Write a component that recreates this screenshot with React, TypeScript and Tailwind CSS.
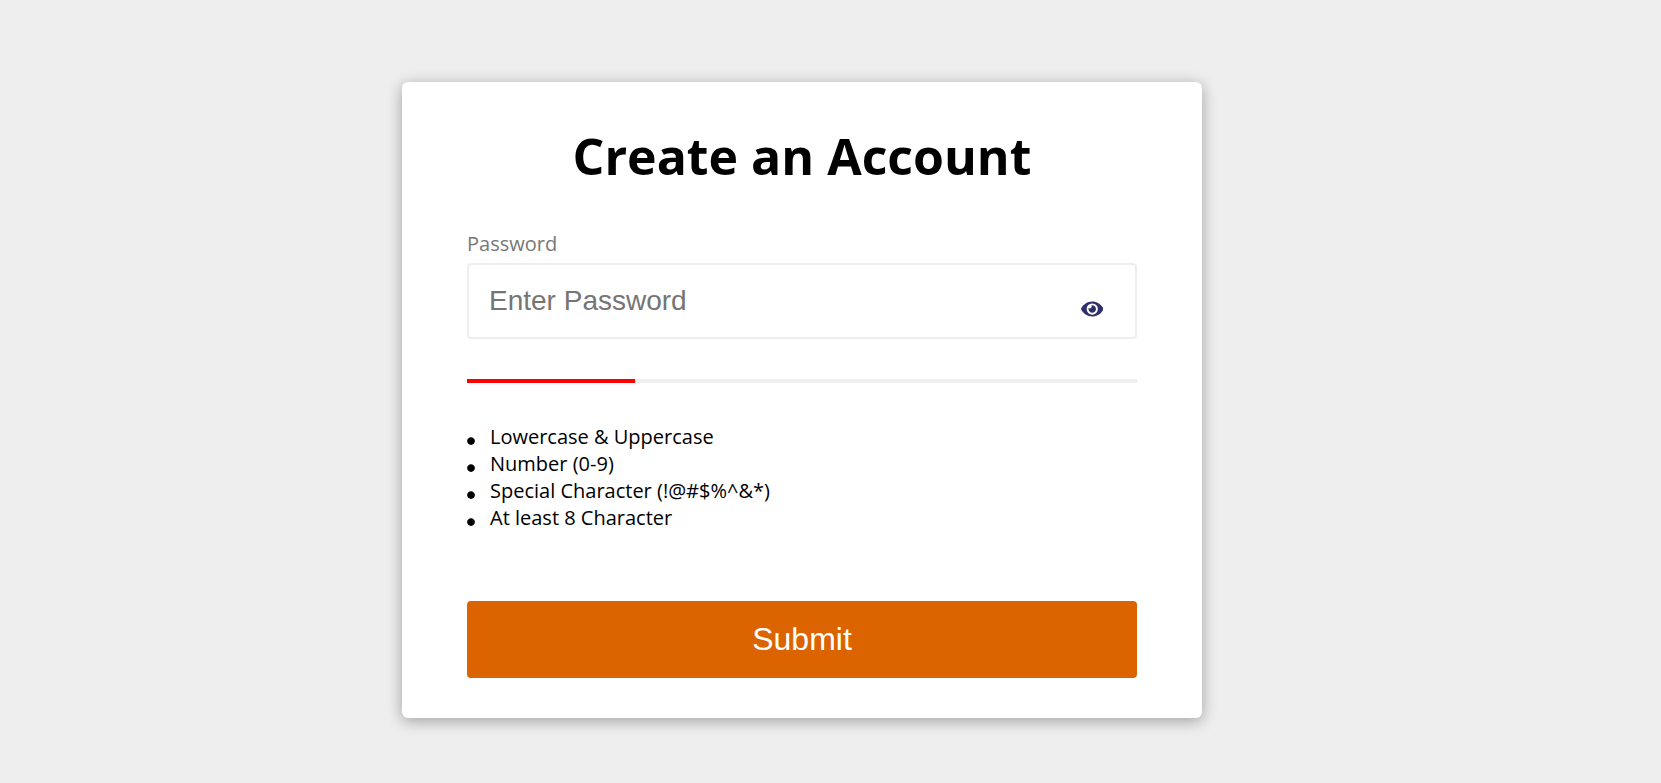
import { FaCircle, FaEye } from "react-icons/fa";

const requirements = [
  "Lowercase & Uppercase",
  "Number (0-9)",
  "Special Character (!@#$%^&*)",
  "At least 8 Character",
];

export default function App() {
  return (
    <main className="h-screen overflow-hidden bg-[#eeeeee] pl-[402px] pt-[82px] font-['Open_Sans',sans-serif]">
      <form className="flex h-[636px] w-[800px] flex-col rounded-[6px] bg-white px-[65px] pt-10 shadow-[0_3px_15px_rgba(0,0,0,0.33)]">
        <h1 className="text-center text-[50px] leading-[68px] font-bold text-black">
          Create an Account
        </h1>
        <label htmlFor="password" className="mt-10 h-[27px] text-[20px] leading-[27px] text-[#777777]">
          Password
        </label>
        <div className="mt-[6px] flex h-[76px] items-center rounded-[4px] border-2 border-[#eeeeee] pl-5 pr-8">
          <input
            id="password"
            type="password"
            placeholder="Enter Password"
            className="min-w-0 flex-1 font-['Liberation_Sans',sans-serif] text-[28px] leading-8 outline-none placeholder:text-[#757575]"
          />
          <FaEye className="mt-[15px] h-5 w-[22.5px] text-[#302f6b]" />
        </div>
        <div className="mt-10 h-1 bg-[#eeeeee]">
          <div className="h-full w-[168px] bg-[#ff0000]" />
        </div>
        <ul className="mt-10 text-[20px] leading-[27px] text-black">
          {requirements.map((text) => (
            <li key={text} className="flex h-[27px] items-center gap-[15px]">
              <FaCircle className="mt-2 size-2" />
              <span>{text}</span>
            </li>
          ))}
        </ul>
        <button
          type="button"
          className="mt-[70px] h-[77px] rounded-[4px] bg-[#db6400] pb-0.5 font-['Liberation_Sans',sans-serif] text-[32px] text-white"
        >
          Submit
        </button>
      </form>
    </main>
  );
}
